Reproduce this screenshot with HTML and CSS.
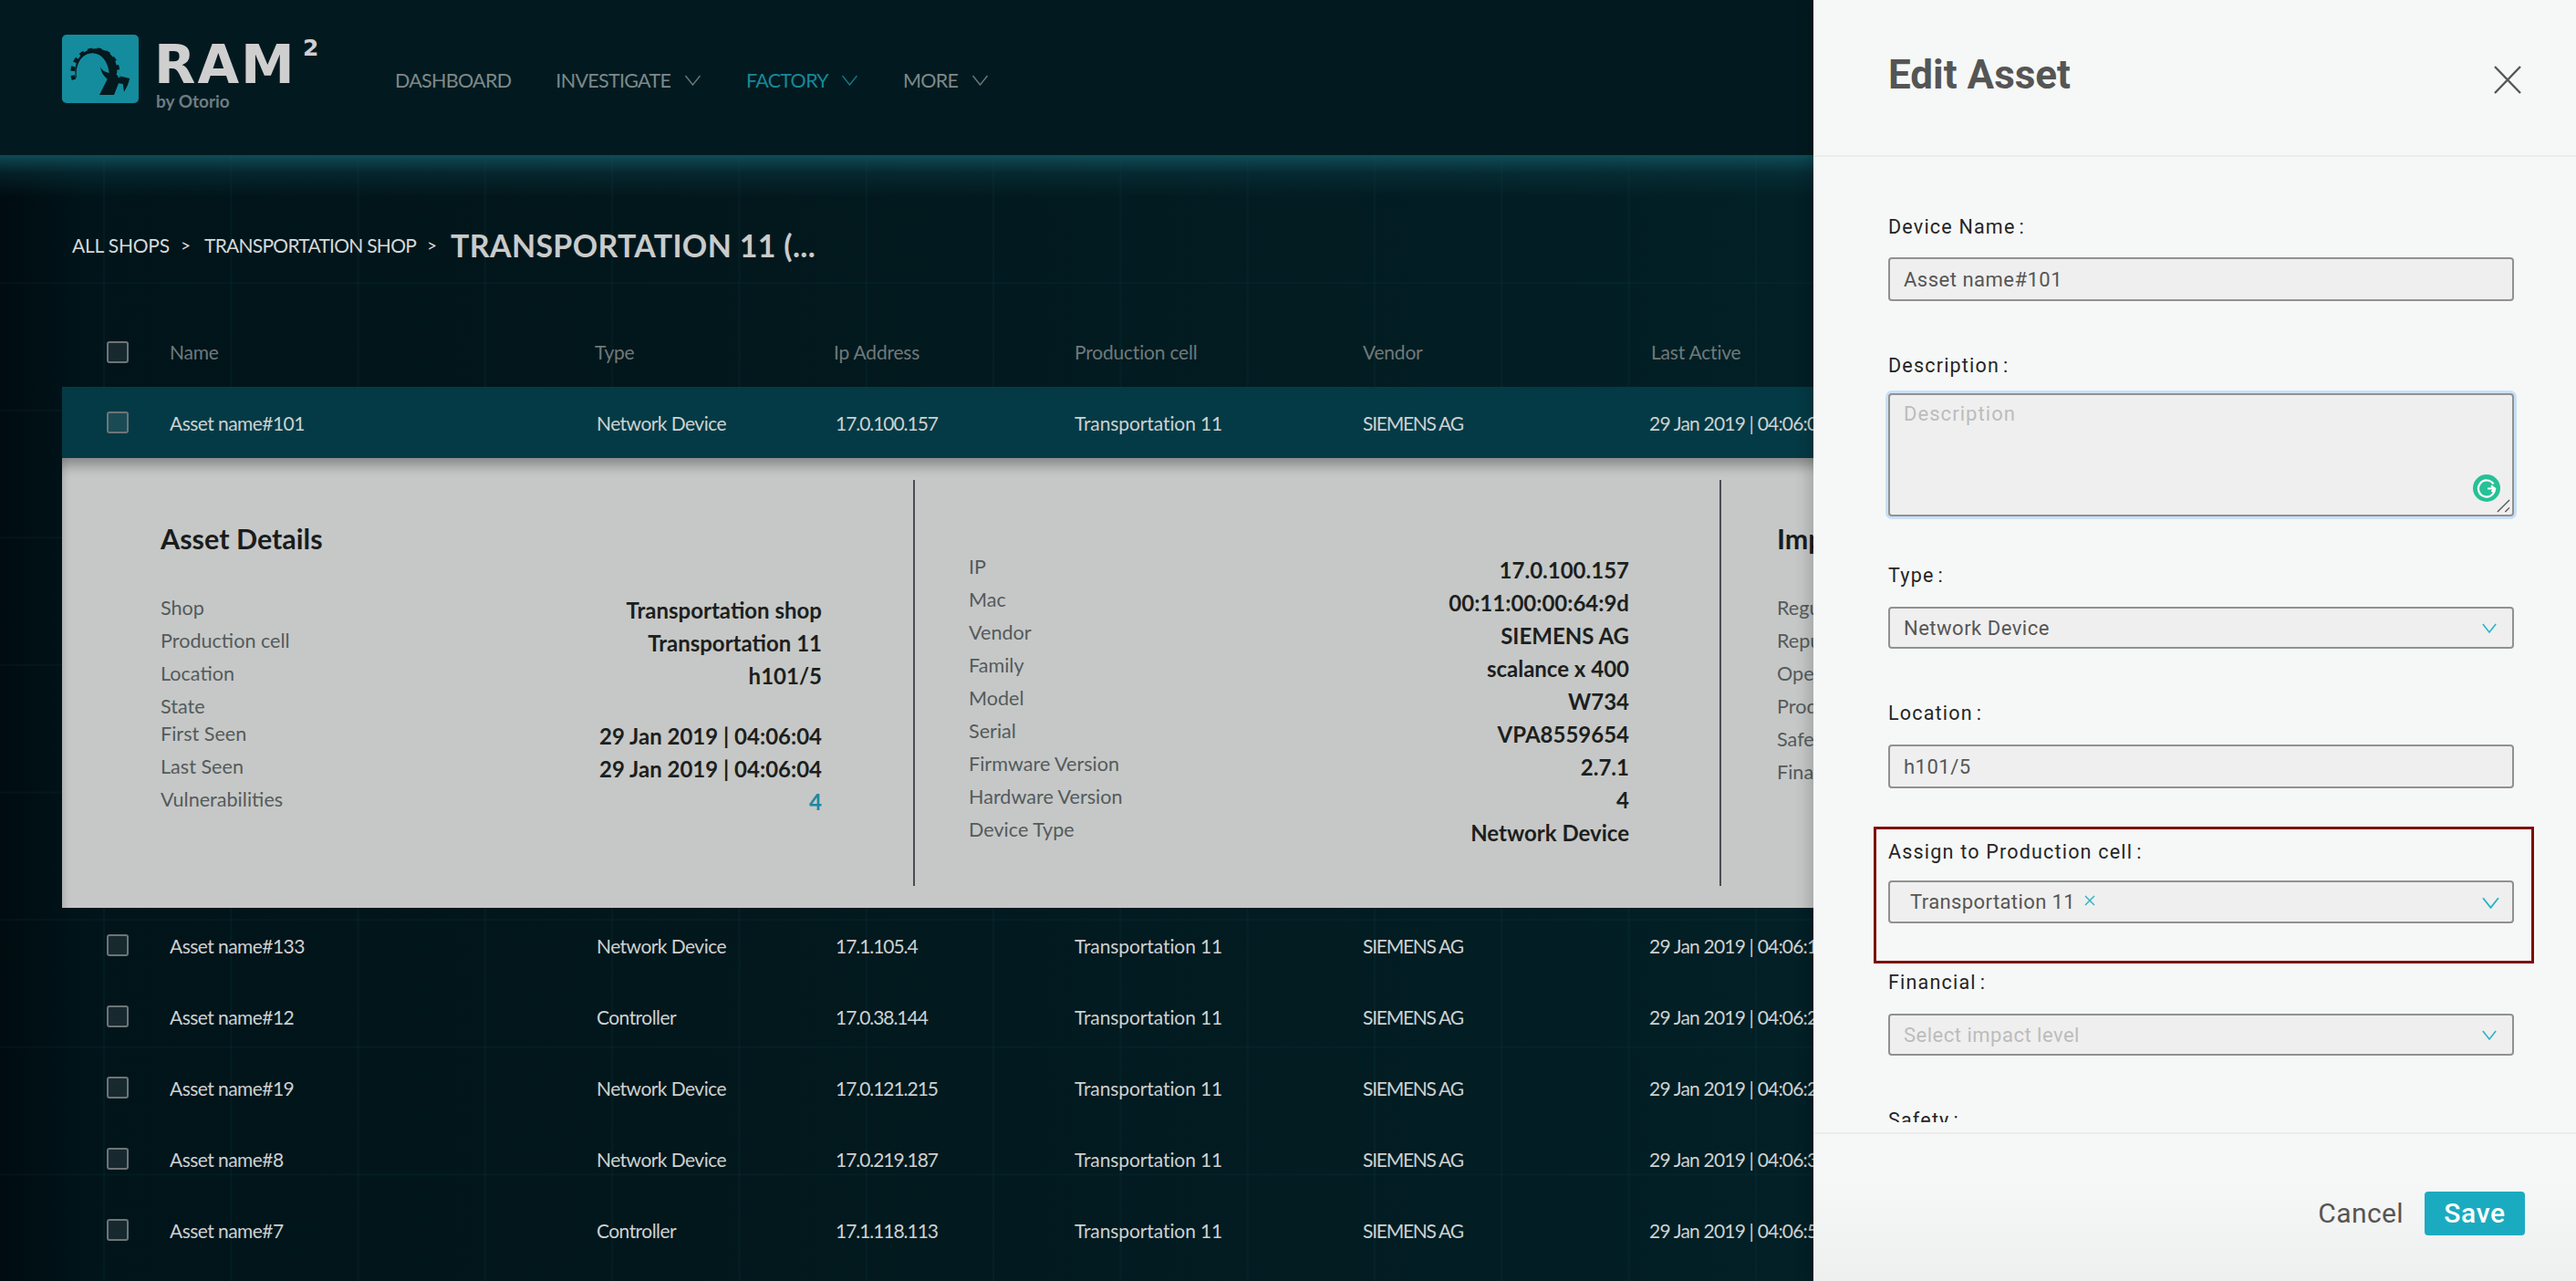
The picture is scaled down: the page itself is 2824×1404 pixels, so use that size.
FILE: index.html
```html
<!DOCTYPE html>
<html lang="en">
<head>
<meta charset="utf-8">
<title>Edit Asset</title>
<link rel="stylesheet" href="styles.css">
</head>
<body>
<div class="page">
  <header class="topbar">
    <div class="brand">
      <svg class="logo-mark" viewBox="24 24 252 225" aria-hidden="true">
        <path class="gear-teeth" d="M63 172 A74 74 0 1 1 207 146"/>
        <path class="gear-body" d="M70 166C58 116 90 70 133 70C180 70 207 105 205 148L196 176L180 172C182 118 156 85 124 85C92 85 66 118 72 166Z"/>
        <path class="gear-body" d="M150 130C158 148 178 152 196 150L206 158L247 168L240 190L228 212L224 186L210 184L195 222L147 222L173 170C160 160 152 146 150 130Z"/>
        <path class="logo-eye" d="M207 158L219 162L209 166Z"/>
      </svg>
      <div class="wordmark">
        <div class="ram">RAM<sup class="ram-sup">2</sup></div>
        <div class="by">by Otorio</div>
      </div>
    </div>
    <nav class="nav">
      <span class="nav-item">DASHBOARD</span>
      <span class="nav-item">INVESTIGATE <svg class="nav-chev" viewBox="0 0 18 12"><path d="M1 1L9 11L17 1"/></svg></span>
      <span class="nav-item nav-active">FACTORY <svg class="nav-chev" viewBox="0 0 18 12"><path d="M1 1L9 11L17 1"/></svg></span>
      <span class="nav-item">MORE <svg class="nav-chev" viewBox="0 0 18 12"><path d="M1 1L9 11L17 1"/></svg></span>
    </nav>
  </header>

  <main class="main">
    <div class="crumbs">
      <span class="crumb">ALL SHOPS</span><span class="crumb-sep">&gt;</span>
      <span class="crumb crumb-long">TRANSPORTATION SHOP</span><span class="crumb-sep">&gt;</span>
      <span class="crumb-title">TRANSPORTATION 11 (...</span>
    </div>

    <div class="thead">
      <span class="check-cell"><i class="check"></i></span>
      <span>Name</span><span>Type</span><span>Ip Address</span><span>Production cell</span><span>Vendor</span><span>Last Active</span>
    </div>

    <div class="trow trow-selected">
      <span class="check-cell"><i class="check"></i></span>
      <span>Asset name#101</span><span>Network Device</span><span>17.0.100.157</span><span>Transportation 11</span><span>SIEMENS AG</span><span>29 Jan 2019 | 04:06:04</span>
    </div>

    <section class="details">
      <div class="dcol dcol-a">
        <h3 class="dtitle">Asset Details</h3>
        <div class="drow"><span>Shop</span><b>Transportation shop</b></div>
        <div class="drow"><span>Production cell</span><b>Transportation 11</b></div>
        <div class="drow"><span>Location</span><b>h101/5</b></div>
        <div class="drow drow-short"><span>State</span></div>
        <div class="drow"><span>First Seen</span><b>29 Jan 2019 | 04:06:04</b></div>
        <div class="drow"><span>Last Seen</span><b>29 Jan 2019 | 04:06:04</b></div>
        <div class="drow"><span>Vulnerabilities</span><b class="link">4</b></div>
      </div>
      <div class="dcol dcol-b">
        <div class="drow"><span>IP</span><b>17.0.100.157</b></div>
        <div class="drow"><span>Mac</span><b>00:11:00:00:64:9d</b></div>
        <div class="drow"><span>Vendor</span><b>SIEMENS AG</b></div>
        <div class="drow"><span>Family</span><b>scalance x 400</b></div>
        <div class="drow"><span>Model</span><b>W734</b></div>
        <div class="drow"><span>Serial</span><b>VPA8559654</b></div>
        <div class="drow"><span>Firmware Version</span><b>2.7.1</b></div>
        <div class="drow"><span>Hardware Version</span><b>4</b></div>
        <div class="drow"><span>Device Type</span><b>Network Device</b></div>
      </div>
      <div class="dcol dcol-c">
        <h3 class="dtitle">Impact</h3>
        <div class="drow"><span>Regulatory</span></div>
        <div class="drow"><span>Reputation</span></div>
        <div class="drow"><span>Operational</span></div>
        <div class="drow"><span>Production</span></div>
        <div class="drow"><span>Safety</span></div>
        <div class="drow"><span>Financial</span></div>
      </div>
    </section>

    <div class="trow trow-after">
      <span class="check-cell"><i class="check"></i></span>
      <span>Asset name#133</span><span>Network Device</span><span>17.1.105.4</span><span>Transportation 11</span><span>SIEMENS AG</span><span>29 Jan 2019 | 04:06:14</span>
    </div>
    <div class="trow">
      <span class="check-cell"><i class="check"></i></span>
      <span>Asset name#12</span><span>Controller</span><span>17.0.38.144</span><span>Transportation 11</span><span>SIEMENS AG</span><span>29 Jan 2019 | 04:06:22</span>
    </div>
    <div class="trow">
      <span class="check-cell"><i class="check"></i></span>
      <span>Asset name#19</span><span>Network Device</span><span>17.0.121.215</span><span>Transportation 11</span><span>SIEMENS AG</span><span>29 Jan 2019 | 04:06:27</span>
    </div>
    <div class="trow">
      <span class="check-cell"><i class="check"></i></span>
      <span>Asset name#8</span><span>Network Device</span><span>17.0.219.187</span><span>Transportation 11</span><span>SIEMENS AG</span><span>29 Jan 2019 | 04:06:31</span>
    </div>
    <div class="trow">
      <span class="check-cell"><i class="check"></i></span>
      <span>Asset name#7</span><span>Controller</span><span>17.1.118.113</span><span>Transportation 11</span><span>SIEMENS AG</span><span>29 Jan 2019 | 04:06:52</span>
    </div>
  </main>

  <aside class="drawer">
    <div class="drawer-head">
      <h2 class="drawer-title">Edit Asset</h2>
      <svg class="drawer-close" viewBox="0 0 30 31"><path d="M1 1L29 30M29 1L1 30"/></svg>
    </div>
    <div class="drawer-body">
      <div class="field field-first">
        <label class="flabel">Device Name<span class="colon">:</span></label>
        <div class="control control-input">Asset name#101</div>
      </div>
      <div class="field field-desc">
        <label class="flabel">Description<span class="colon">:</span></label>
        <div class="control control-area">
          <span class="placeholder">Description</span>
          <svg class="grammarly" viewBox="0 0 30 30">
            <circle class="g-bg" cx="15" cy="15" r="15"/>
            <path class="g-mark" d="M22.5 10.5A9 9 0 1 0 24 15.5L16 15.5M20 12.5L24 15.5L20.5 19"/>
          </svg>
          <svg class="resizer" viewBox="0 0 16 16"><path d="M1 15L15 1M10 15L15 10"/></svg>
        </div>
      </div>
      <div class="field">
        <label class="flabel">Type<span class="colon">:</span></label>
        <div class="control control-select">Network Device<svg class="chev" viewBox="0 0 18 12"><path d="M1 1L9 11L17 1"/></svg></div>
      </div>
      <div class="field field-loc">
        <label class="flabel">Location<span class="colon">:</span></label>
        <div class="control control-input">h101/5</div>
      </div>
      <div class="field field-assign">
        <div class="annot"></div>
        <label class="flabel">Assign to Production cell<span class="colon">:</span></label>
        <div class="control control-tag"><span class="tag">Transportation 11</span><svg class="tag-x" viewBox="0 0 12 12"><path d="M1 1L11 11M11 1L1 11"/></svg><svg class="chev chev-big" viewBox="0 0 18 12"><path d="M1 1L9 11L17 1"/></svg></div>
      </div>
      <div class="field">
        <label class="flabel">Financial<span class="colon">:</span></label>
        <div class="control control-select"><span class="placeholder-inline">Select impact level</span><svg class="chev" viewBox="0 0 18 12"><path d="M1 1L9 11L17 1"/></svg></div>
      </div>
      <div class="field">
        <label class="flabel">Safety<span class="colon">:</span></label>
      </div>
    </div>
    <div class="drawer-foot">
      <button class="btn-cancel">Cancel</button>
      <button class="btn-save">Save</button>
    </div>
  </aside>
</div>
</body>
</html>
```
FILE: styles.css
```css
* { box-sizing: border-box; }
html, body { margin: 0; padding: 0; height: 100%; }
body { font-family: "Lato", "Noto Sans", sans-serif; background: #000f13; overflow: hidden; }

.page {
  position: relative;
  width: 2824px;
  height: 1404px;
  overflow: hidden;
  background-color: #02171c;
  background-image:
    linear-gradient(180deg, rgba(18, 88, 100, .8) 0, rgba(14, 66, 78, .35) 20px, rgba(8, 40, 50, 0) 46px),
    linear-gradient(90deg, rgba(16, 66, 76, .16) 2px, transparent 2px),
    linear-gradient(180deg, rgba(16, 66, 76, .14) 2px, transparent 2px),
    linear-gradient(90deg, #000c10 0, #00141a 90px, #02171c 700px, #022026 1988px);
  background-size: 100% 240px, 139.3px 100%, 100% 139.6px, 100% 100%;
  background-position: 0 170px, 113px 0, 0 30px, 0 0;
  background-repeat: no-repeat, repeat, repeat, no-repeat;
}

/* top bar */
.topbar {
  height: 170px;
  background: #021a1f;
  display: flex;
  align-items: flex-start;
  padding: 38px 0 0 68px;
}
.brand { display: flex; }
.logo-mark { width: 84px; height: 75px; background: #148c9e; border-radius: 5px; display: block; }
.gear-teeth { fill: none; stroke: #03191e; stroke-width: 14; stroke-dasharray: 15 14; }
.gear-body { fill: #03191e; }
.logo-eye { fill: #148c9e; }
.wordmark { margin-left: 17px; width: 182px; }
.ram { font-family: "DejaVu Sans", "Lato", sans-serif; font-weight: 700; font-size: 59px; line-height: 42px; height: 42px; margin-top: 12px; color: #cfcfcf; letter-spacing: 2px; position: relative; }
.ram-sup { position: absolute; left: 163px; top: -10px; font-size: 25px; line-height: 26px; letter-spacing: 0; vertical-align: baseline; }
.by { font-weight: 700; font-size: 19px; line-height: 24px; margin-top: 7px; color: #6f7c84; margin-left: 2px; }

.nav { display: flex; margin-left: 82px; margin-top: 34px; color: #7d898b; font-size: 21.5px; line-height: 32px; }
.nav-item { display: flex; align-items: center; letter-spacing: -.7px; margin-right: 49px; white-space: pre; }
.nav-active { color: #17889a; }
.nav-chev { width: 19px; height: 12px; margin-left: 10px; }
.nav-chev path { fill: none; stroke: currentColor; stroke-width: 1.4; opacity: .85; }

/* breadcrumbs */
.main { padding-left: 68px; width: 2824px; }
.crumbs { height: 178px; padding: 18px 0 0 11px; display: flex; align-items: center; color: #d6d8d8; white-space: pre; }
.crumb { font-size: 21px; letter-spacing: -.2px; }
.crumb-long { letter-spacing: -.75px; }
.crumb-sep { font-size: 19px; margin: 0 15px 0 12px; }
.crumb-title { font-size: 34px; font-weight: 700; color: #c9cbcb; letter-spacing: .3px; }

/* table */
.thead, .trow { display: grid; align-items: center; font-size: 21px; white-space: nowrap; }
.thead {
  height: 76px;
  grid-template-columns: 118px 466px 262px 264px 316px 316px 1fr;
  color: #6e7a7b;
  letter-spacing: -.2px;
}
.thead span:not(.check-cell) { margin-top: -2px; }
.trow {
  height: 78px;
  grid-template-columns: 118px 468px 262px 262px 316px 314px 1fr;
  color: #cdd1d1;
}
.trow span:nth-child(2), .trow span:nth-child(3) { letter-spacing: -.55px; }
.trow span:nth-child(4) { letter-spacing: -1.05px; }
.trow span:nth-child(5) { letter-spacing: -.1px; }
.trow span:nth-child(6) { letter-spacing: -1.25px; }
.trow span:nth-child(7) { letter-spacing: -.8px; }
.trow-selected { background: #043a45; }
.trow-after { margin-top: 2px; }
.check-cell { display: flex; padding-left: 49px; }
.check { width: 24px; height: 24px; border: 2px solid #6c7577; border-radius: 3px; background: rgba(255, 255, 255, .09); display: block; }

/* expanded details */
.details {
  height: 493px;
  padding: 24px 0;
  display: flex;
  background: #c6c8c7;
  box-shadow: inset 0 16px 14px -8px rgba(0, 0, 0, .32), inset 10px 0 10px -8px rgba(0, 0, 0, .12);
  color: #1c1f20;
}
.dcol { flex: none; }
.dcol-a { width: 935px; padding: 44px 100px 0 108px; border-right: 2px solid #474d57; }
.dcol-b { width: 884px; padding: 82px 99px 0 59px; border-right: 2px solid #474d57; }
.dcol-c { padding: 44px 0 0 61px; width: 300px; }
.dtitle { margin: 0 0 43px; font-size: 30.5px; line-height: 40px; font-weight: 700; color: #1a1c1d; }
.drow { display: flex; justify-content: space-between; align-items: flex-start; height: 36px; font-size: 21.6px; line-height: 26px; color: #545b5c; }
.drow b { font-size: 24px; font-weight: 700; color: #1c1f20; margin-top: 3px; }
.dcol-b .drow b { margin-top: 4px; }
.drow-short { height: 30px; }
.drow b.link { color: #1a8a9e; }

/* drawer */
.drawer {
  position: absolute;
  top: 0;
  right: 0;
  bottom: 0;
  width: 836px;
  display: flex;
  flex-direction: column;
  font-family: "Roboto", "Liberation Sans", sans-serif;
  background: linear-gradient(180deg, #f6f8f7 92%, #eeefef 100%);
  box-shadow: -6px 0 14px rgba(0, 0, 0, .16);
}
.drawer-head {
  flex: none;
  height: 172px;
  border-bottom: 2px solid #ececec;
  display: flex;
  justify-content: space-between;
  align-items: flex-start;
  padding: 58px 60px 0 82px;
}
.drawer-title { margin: 0; font-size: 44px; line-height: 48px; font-weight: 700; color: #555; }
.drawer-close { width: 30px; height: 31px; margin-top: 14px; }
.drawer-close path { fill: none; stroke: #555; stroke-width: 2.4; }

.drawer-body { flex: 1; min-height: 0; overflow: hidden; padding: 62px 68px 0 82px; margin-bottom: 11px; }
.field { position: relative; margin-bottom: 56px; }
.flabel { display: block; font-size: 21.5px; line-height: 30px; letter-spacing: 1.2px; color: #252525; }
.colon { margin-left: 4px; }
.control {
  position: relative;
  margin-top: 19px;
  border: 2px solid #919191;
  border-radius: 4px;
  background: #efefef;
  padding-left: 15px;
  display: flex;
  align-items: center;
  font-size: 22px;
  letter-spacing: .5px;
  color: #565656;
}
.control-input { height: 48px; }
.control-select { height: 46px; }
.control-tag { height: 47px; margin-top: 16px; padding-left: 22px; letter-spacing: .4px; }
.field-first .control { margin-top: 18px; }
.field-loc { margin-bottom: 55px; }
.field-assign { margin-bottom: 50px; }
.field-desc { margin-bottom: 50px; }
.field-desc .control { margin-top: 15px; }
.control-area { height: 135px; align-items: flex-start; padding-top: 8px; box-shadow: 0 0 0 3px #c8e0f6; letter-spacing: 1.05px; }
.placeholder, .placeholder-inline { color: #bcbcbc; }
.grammarly { position: absolute; right: 13px; bottom: 14px; width: 30px; height: 30px; }
.g-bg { fill: #26c196; }
.g-mark { fill: none; stroke: #fff; stroke-width: 2.2; }
.resizer { position: absolute; right: 2px; bottom: 2px; width: 15px; height: 15px; }
.resizer path { fill: none; stroke: #555; stroke-width: 1.4; }
.chev { position: absolute; right: 17px; top: 50%; width: 16px; height: 11px; margin-top: -5px; }
.chev path { fill: none; stroke: #2ab3c4; stroke-width: 1.8; }
.chev-big { width: 19px; height: 13px; right: 14px; margin-top: -6px; }
.tag-x { width: 12px; height: 12px; margin-left: 10px; margin-top: -3px; }
.tag-x path { fill: none; stroke: #2ab3c4; stroke-width: 1.4; }
.annot { position: absolute; left: -16px; right: -22px; top: -13px; height: 150px; border: 3px solid #7d0a0a; pointer-events: none; }

.drawer-foot {
  flex: none;
  height: 163px;
  border-top: 2px solid #ececec;
  display: flex;
  align-items: flex-start;
  justify-content: flex-end;
  padding: 63px 56px 0 0;
}
.btn-cancel, .btn-save { font-family: inherit; font-size: 30px; line-height: 48px; height: 48px; border: 0; padding: 0; letter-spacing: .4px; }
.btn-cancel { background: none; color: #555; margin-right: 23px; }
.btn-save { width: 110px; background: #1babc0; color: #fff; font-weight: 500; border-radius: 4px; letter-spacing: .6px; }
```
